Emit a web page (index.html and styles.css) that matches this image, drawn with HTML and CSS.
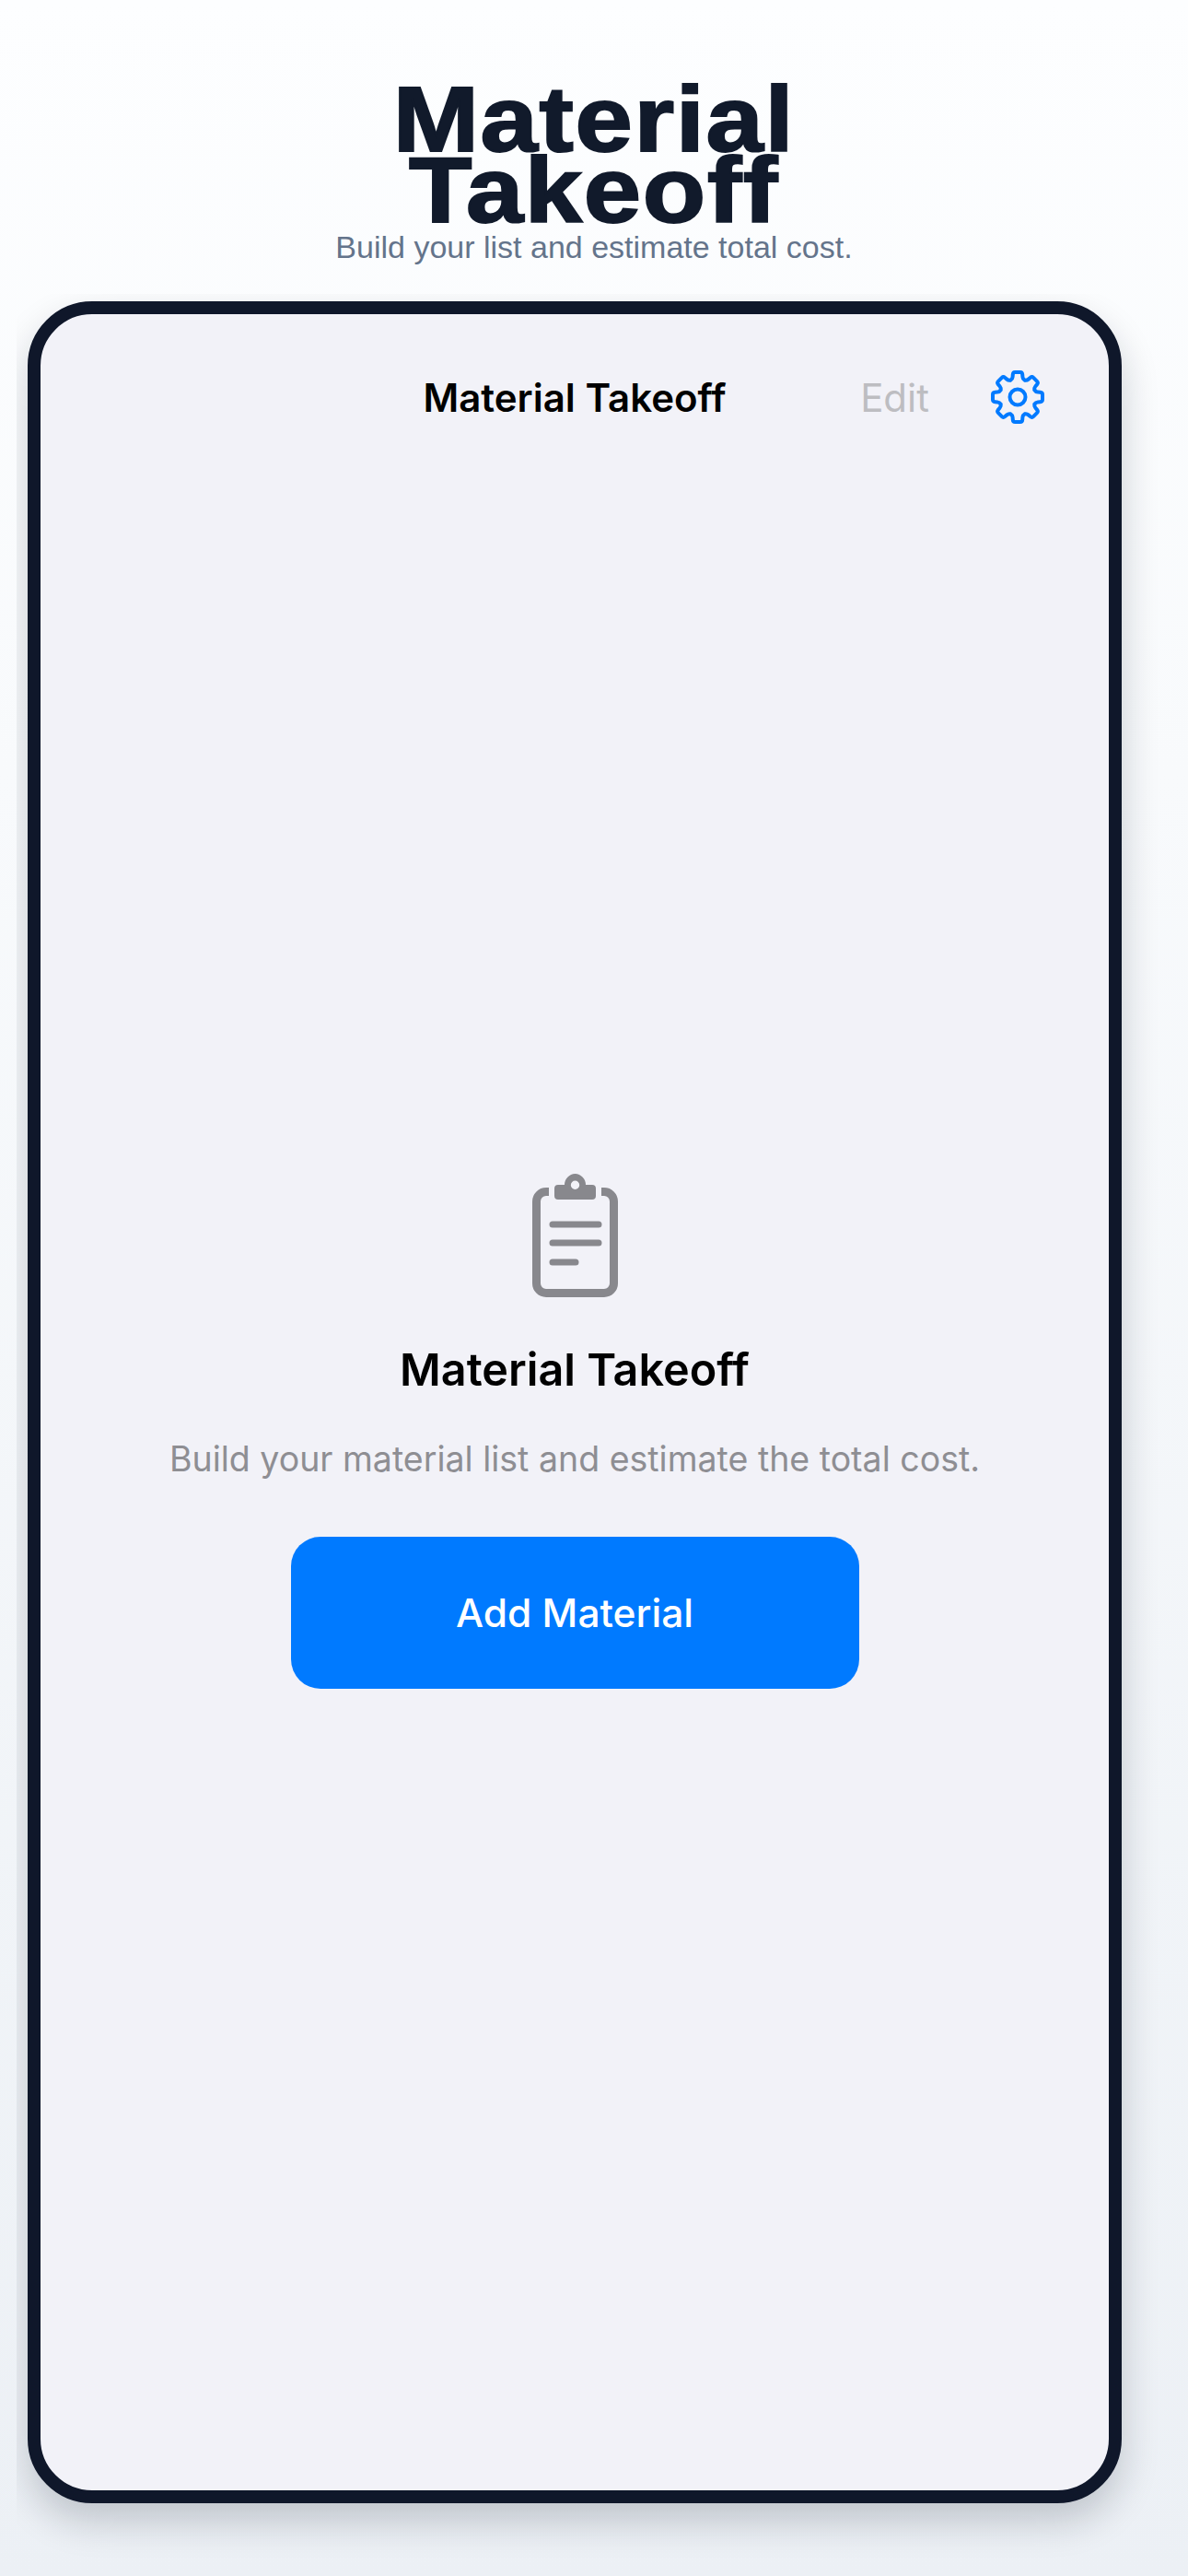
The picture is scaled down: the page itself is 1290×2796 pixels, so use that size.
FILE: index.html
```html
<!DOCTYPE html>
<html lang="en">
<head>
    <meta charset="UTF-8">
    <meta name="viewport" content="width=device-width, initial-scale=1.0">
    <title>Material Takeoff</title>
    <link rel="stylesheet" href="styles.css">
</head>
<body>
    <header class="page-head">
        <h1 class="page-title">Material<br>Takeoff</h1>
        <p class="page-sub">Build your list and estimate total cost.</p>
    </header>

    <!-- Phone frame -->
    <div class="phone-wrap">
        <main class="phone">
            <div class="nav">
                <div></div>
                <div class="nav-title">Material Takeoff</div>
                <div class="nav-actions">
                    <span class="nav-edit">Edit</span>
                    <svg class="gear" viewBox="-30 -30 60 60" width="60" height="60">
                        <defs>
                            <path id="tooth" d="M-7.5 -18.500 Q-5.600 -19.500 -5.400 -22 L-5.200 -24.500 Q-5 -27 -2.800 -27 H2.800 Q5 -27 5.200 -24.500 L5.400 -22 Q5.600 -19.500 7.500 -18.500"/>
                        </defs>
                        <use href="#tooth"/>
                        <use href="#tooth" transform="rotate(45)"/>
                        <use href="#tooth" transform="rotate(90)"/>
                        <use href="#tooth" transform="rotate(135)"/>
                        <use href="#tooth" transform="rotate(180)"/>
                        <use href="#tooth" transform="rotate(225)"/>
                        <use href="#tooth" transform="rotate(270)"/>
                        <use href="#tooth" transform="rotate(315)"/>
                        <circle cx="0" cy="0" r="8.500"/>
                    </svg>
                </div>
            </div>

            <section class="empty">
                <svg class="clipboard" viewBox="0 0 93 134" width="93" height="134">
                    <path class="clip-outline" d="M18 19.500H15A10.500 10.500 0 0 0 4.500 30V119A10.500 10.500 0 0 0 15 129.500H78A10.500 10.500 0 0 0 88.500 119V30A10.500 10.500 0 0 0 78 19.500H75"/>
                    <path class="clip-top" fill-rule="evenodd" d="M46.500 0A12 12 0 0 1 58 12H65A4 4 0 0 1 69 16V24A4 4 0 0 1 65 28H28A4 4 0 0 1 24 24V16A4 4 0 0 1 28 12H35A12 12 0 0 1 46.500 0ZM46.500 7.500A4.700 4.700 0 1 0 46.500 16.900A4.700 4.700 0 1 0 46.500 7.500Z"/>
                    <path class="clip-line" d="M22 55H72M22 75H72M22 96H47"/>
                </svg>
                <h2 class="empty-title">Material Takeoff</h2>
                <p class="empty-text">Build your material list and estimate the total cost.</p>
                <button class="add-btn">Add Material</button>
            </section>
        </main>
    </div>
</body>
</html>
```

FILE: styles.css
```css
html, body {
    margin: 0;
    padding: 0;
}
body {
    width: 1290px;
    height: 2796px;
    overflow: hidden;
    background: linear-gradient(180deg, #fdfeff 0%, #f8fafc 30%, #ecf0f5 100%);
    font-family: "Inter", "Liberation Sans", sans-serif;
}

.page-head {
    box-sizing: border-box;
    height: 319px;
    padding-top: 91px;
    text-align: center;
    font-family: "Liberation Sans", Arial, sans-serif;
}
.page-title {
    width: 500px;
    margin: 0 auto;
    font-size: 100px;
    font-weight: 700;
    line-height: 77px;
    letter-spacing: 1.500px;
    color: #111a2b;
    transform: scaleX(1.12);
    -webkit-text-stroke: 2px #111a2b;
}
.page-sub {
    margin: 3px 0 0;
    font-size: 34px;
    line-height: 40px;
    color: #64748b;
}

/* shadow gets cut off at the left and top of this box */
.phone-wrap {
    margin-left: 18px;
    padding: 8px 0 79px 12px;
    overflow: hidden;
}
.phone {
    box-sizing: border-box;
    width: 1188px;
    height: 2390px;
    border: 14px solid #0f172a;
    border-radius: 70px;
    background: #f2f2f8;
    box-shadow: 0 20px 40px rgba(15, 23, 42, 0.2);
    display: flex;
    flex-direction: column;
}

.nav {
    height: 180px;
    display: grid;
    grid-template-columns: 1fr auto 1fr;
    align-items: center;
}
.nav-title {
    font-size: 42px;
    font-weight: 600;
    color: #000;
}
.nav-actions {
    display: flex;
    justify-content: flex-end;
    align-items: center;
    gap: 66px;
    padding-right: 69px;
}
.nav-edit {
    font-size: 42px;
    color: #bdbdc1;
}
.gear {
    fill: none;
    stroke: #007aff;
    stroke-width: 4;
    stroke-linecap: round;
    stroke-linejoin: round;
}

.empty {
    flex: 1;
    display: flex;
    flex-direction: column;
    align-items: center;
    padding-top: 753px;
}
.clipboard {
    display: block;
    margin-bottom: 49px;
}
.clip-outline {
    fill: none;
    stroke: #88888d;
    stroke-width: 9;
}
.clip-top {
    fill: #88888d;
}
.clip-line {
    fill: none;
    stroke: #88888d;
    stroke-width: 7;
    stroke-linecap: round;
}
.empty-title {
    margin: 0 0 45px;
    font-size: 48.500px;
    font-weight: 600;
    line-height: 60px;
    color: #000;
}
.empty-text {
    margin: 0 0 62px;
    font-size: 37.500px;
    line-height: 44px;
    color: #8e8e93;
}
.add-btn {
    width: 617px;
    height: 165px;
    border: none;
    border-radius: 32px;
    background: #007aff;
    color: #fff;
    font-family: inherit;
    font-size: 42.500px;
    font-weight: 500;
}
```
